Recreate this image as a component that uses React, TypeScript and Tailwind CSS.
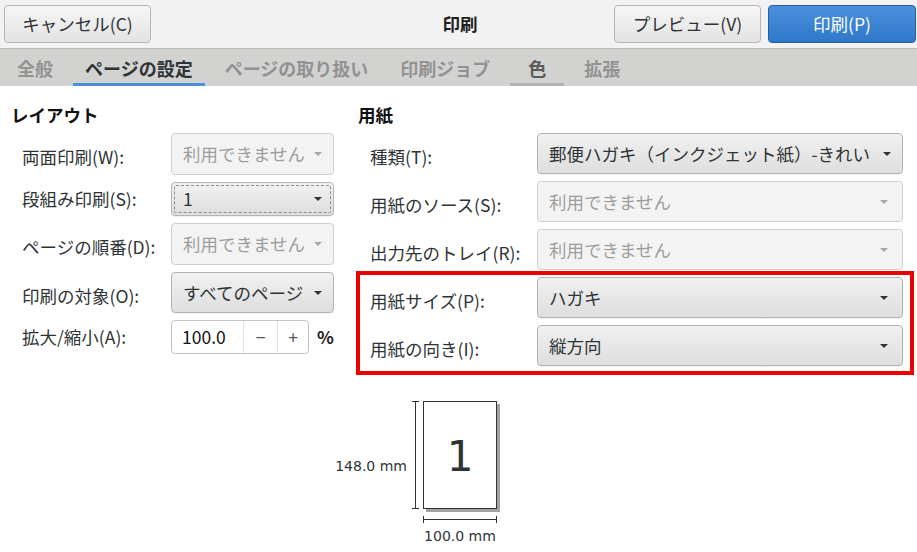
import React from "react";

const jp = "font-['Noto_Sans_CJK_JP','Noto_Sans',sans-serif]";
const dv = "font-['DejaVu_Sans',sans-serif]";

function Arrow({ muted }: { muted?: boolean }) {
  return (
    <span
      className={
        muted
          ? "inline-block h-0 w-0 shrink-0 border-x-[4px] border-t-[4px] border-x-transparent border-t-[#a8a8a8]"
          : "inline-block h-0 w-0 shrink-0 border-x-[4px] border-t-[4px] border-x-transparent border-t-[#2e3436]"
      }
    />
  );
}

type ComboProps = {
  value: string;
  disabled?: boolean;
  focused?: boolean;
  className?: string;
};

function Combo({ value, disabled, focused, className = "" }: ComboProps) {
  const face = disabled
    ? "border-[#cfcfcf] bg-[#f3f3f3] text-[#9d9d9d]"
    : "border-[#b4b4b2] bg-gradient-to-b from-[#f1f1f1] to-[#dedede] text-[#2e3436] shadow-[0_1px_0_rgba(0,0,0,0.06)]";
  return (
    <div className={`relative flex items-center justify-between gap-[6px] rounded-[4px] border pl-[11px] pr-[11px] ${face} ${className}`}>
      <span className="truncate">{value}</span>
      <Arrow muted={disabled} />
      {focused && (
        <span className="pointer-events-none absolute inset-[2px] rounded-[2px] border border-dashed border-[#8e8e8e]" />
      )}
    </div>
  );
}

function HeaderButton({ children, primary }: { children: React.ReactNode; primary?: boolean }) {
  return (
    <button
      className={
        primary
          ? "h-[38px] w-[148px] rounded-[4px] border border-[#1f5fa8] bg-gradient-to-b from-[#4a90dc] to-[#2f78c9] text-white"
          : "h-[38px] w-[147px] rounded-[4px] border border-[#b6b6b3] bg-gradient-to-b from-[#f6f6f6] to-[#e3e3e3] text-[#2e3436]"
      }
    >
      {children}
    </button>
  );
}

const tabs = [
  { name: "全般" },
  { name: "ページの設定", active: true },
  { name: "ページの取り扱い" },
  { name: "印刷ジョブ" },
  { name: "色", hover: true },
  { name: "拡張" },
];

function Row({ label, children, offset = true }: { label: string; children: React.ReactNode; offset?: boolean }) {
  return (
    <div className="flex items-center">
      <div className={offset ? "shrink-0 pt-[6px]" : "shrink-0"}>{label}</div>
      {children}
    </div>
  );
}

export default function App() {
  return (
    <div className={`${jp} relative h-[552px] w-[917px] overflow-hidden bg-white text-[17.5px] leading-[24px] text-[#2e3436]`}>
      {/* title bar */}
      <div className="grid h-[49px] grid-cols-[1fr_auto_1fr] items-center border-b border-[#b9b9b7] bg-[#f2f2f2] pl-[4px] pr-[1px]">
        <div>
          <HeaderButton>キャンセル(C)</HeaderButton>
        </div>
        <div className="font-bold text-[#1e1e1e]">印刷</div>
        <div className="flex justify-end gap-[7px]">
          <HeaderButton>プレビュー(V)</HeaderButton>
          <HeaderButton primary>印刷(P)</HeaderButton>
        </div>
      </div>

      {/* tabs */}
      <div className="flex h-[37px] gap-[8px] bg-[#d2d2d1] pl-[5px] text-[18px]">
        {tabs.map((t) => (
          <div
            key={t.name}
            className={
              t.active
                ? "flex min-w-[54px] items-center justify-center border-b-[3px] border-[#4a90d9] px-[12px] pt-[3px] font-bold text-[#2e3436]"
                : t.hover
                  ? "flex min-w-[54px] items-center justify-center border-b-[3px] border-[#b3b3b3] px-[12px] pt-[3px] font-bold text-[#5b5b5b]"
                  : "flex min-w-[54px] items-center justify-center border-b-[3px] border-transparent px-[12px] pt-[3px] font-bold text-[#929292]"
            }
          >
            {t.name}
          </div>
        ))}
      </div>

      {/* page setup */}
      <div className="flex pl-[11px] pt-[17px]">
        <div className="w-[347px]">
          <div className="mb-[6px] font-bold text-[#111]">レイアウト</div>
          <div className="flex flex-col gap-[7px] pl-[11px] [&>div>div:first-child]:w-[149px]">
            <Row label="両面印刷(W):">
              <Combo value="利用できません" disabled className="h-[42px] w-[163px]" />
            </Row>
            <Row label="段組み印刷(S):" offset={false}>
              <Combo value="1" focused className="h-[34px] w-[163px]" />
            </Row>
            <Row label="ページの順番(D):">
              <Combo value="利用できません" disabled className="h-[42px] w-[163px]" />
            </Row>
            <Row label="印刷の対象(O):">
              <Combo value="すべてのページ" className="h-[41px] w-[163px]" />
            </Row>
            <Row label="拡大/縮小(A):" offset={false}>
              <div className="flex h-[34px] w-[138px] overflow-hidden rounded-[4px] border border-[#c4c4c4] bg-white">
                <div className="flex w-[71px] items-center pl-[10px] text-[#111]">100.0</div>
                <div className="flex w-[34px] items-center justify-center border-l border-[#e1e1e1] text-[#555]">−</div>
                <div className="flex flex-1 items-center justify-center border-l border-[#e1e1e1] text-[#555]">+</div>
              </div>
              <span className="ml-[8px] font-bold text-[#222]">%</span>
            </Row>
          </div>
        </div>

        <div className="relative w-[545px]">
          <div className="mb-[6px] font-bold text-[#111]">用紙</div>
          <div className="flex flex-col gap-[7px] pl-[12px] [&>div>div:first-child]:w-[167px]">
            <Row label="種類(T):">
              <Combo value="郵便ハガキ（インクジェット紙）-きれい" className="h-[41px] w-[366px]" />
            </Row>
            <Row label="用紙のソース(S):">
              <Combo value="利用できません" disabled className="h-[41px] w-[366px] pr-[14px]" />
            </Row>
            <Row label="出力先のトレイ(R):">
              <Combo value="利用できません" disabled className="h-[41px] w-[366px] pr-[14px]" />
            </Row>
            <Row label="用紙サイズ(P):">
              <Combo value="ハガキ" className="h-[41px] w-[366px] pr-[14px]" />
            </Row>
            <Row label="用紙の向き(I):">
              <Combo value="縦方向" className="h-[41px] w-[366px] pr-[14px]" />
            </Row>
          </div>
          {/* highlight around size/orientation */}
          <div className="pointer-events-none absolute left-[-2px] top-[168px] h-[104px] w-[558px] border-[4px] border-[#ee0000]" />
        </div>
      </div>

      {/* page preview */}
      <div className={`${dv} mt-[35px] flex justify-center text-[14px] leading-[18px] text-[#2e3436]`}>
        <div className="grid grid-cols-[87px_74px_84px] grid-rows-[108px_auto]">
          <div className="flex items-start justify-end">
            <span className="mt-[56px] whitespace-nowrap">148.0 mm</span>
            <div className="ml-[5px] mr-[4px] flex h-full w-[7px] flex-col items-center justify-between">
              <div className="h-px w-[7px] bg-[#2e3436]" />
              <div className="w-px flex-1 bg-[#2e3436]" />
              <div className="h-px w-[7px] bg-[#2e3436]" />
            </div>
          </div>
          <div className="flex items-center justify-center border border-[#2e3436] bg-white pt-[4px] text-[42px] leading-none shadow-[3px_3px_0_#a3a3a3]">
            1
          </div>
          <div />
          <div />
          <div className="flex flex-col items-center">
            <div className="mt-[7px] flex h-[7px] w-full items-center">
              <div className="h-[7px] w-px bg-[#2e3436]" />
              <div className="h-px flex-1 bg-[#2e3436]" />
              <div className="h-[7px] w-px bg-[#2e3436]" />
            </div>
            <span className="mt-[4px] whitespace-nowrap">100.0 mm</span>
          </div>
          <div />
        </div>
      </div>
    </div>
  );
}
